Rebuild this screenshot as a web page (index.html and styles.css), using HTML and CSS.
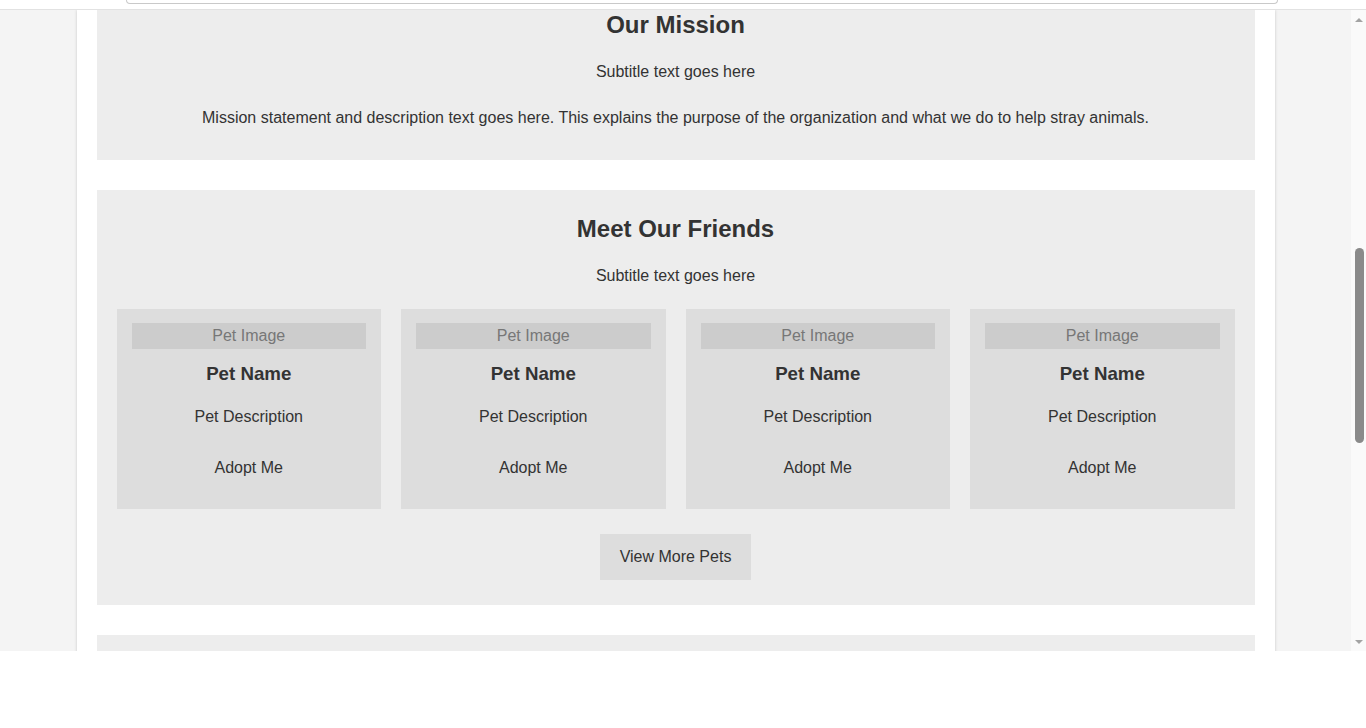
FILE: index.html
```html
<!DOCTYPE html>
<html lang="en">
<head>
<meta charset="utf-8">
<title>Stray Animals</title>
<link rel="stylesheet" href="styles.css">
</head>
<body>
<div class="topbar"><div class="omnibox"></div></div>
<div class="viewport">
  <div class="page">
    <div class="container">
      <section class="section section--clipped">
        <h2 class="section-title">Our Mission</h2>
        <p class="subtitle">Subtitle text goes here</p>
        <p class="mission-text">Mission statement and description text goes here. This explains the purpose of the organization and what we do to help stray animals.</p>
      </section>
      <section class="section">
        <h2 class="section-title">Meet Our Friends</h2>
        <p class="subtitle">Subtitle text goes here</p>
        <div class="cards">
          <div class="card">
            <div class="pet-image">Pet Image</div>
            <h3 class="pet-name">Pet Name</h3>
            <p class="pet-desc">Pet Description</p>
            <p class="adopt">Adopt Me</p>
          </div>
          <div class="card">
            <div class="pet-image">Pet Image</div>
            <h3 class="pet-name">Pet Name</h3>
            <p class="pet-desc">Pet Description</p>
            <p class="adopt">Adopt Me</p>
          </div>
          <div class="card">
            <div class="pet-image">Pet Image</div>
            <h3 class="pet-name">Pet Name</h3>
            <p class="pet-desc">Pet Description</p>
            <p class="adopt">Adopt Me</p>
          </div>
          <div class="card">
            <div class="pet-image">Pet Image</div>
            <h3 class="pet-name">Pet Name</h3>
            <p class="pet-desc">Pet Description</p>
            <p class="adopt">Adopt Me</p>
          </div>
        </div>
        <div class="more-row"><span class="more-btn">View More Pets</span></div>
      </section>
      <section class="section section--next"></section>
    </div>
  </div>
  <div class="scrollbar">
    <div class="arrow arrow--up"></div>
    <div class="thumb"></div>
    <div class="arrow arrow--down"></div>
  </div>
</div>
<div class="below"></div>
</body>
</html>
```

FILE: styles.css
```css
* { box-sizing: border-box; }
html, body { margin: 0; padding: 0; background: #ffffff; }
body {
  font-family: "Liberation Sans", Arial, sans-serif;
  color: #333333;
  width: 1366px;
  height: 728px;
  overflow: hidden;
}
.topbar {
  height: 10px;
  background: #ffffff;
  border-bottom: 1px solid #e2e2e2;
}
.omnibox {
  margin-left: 126px;
  width: 1152px;
  height: 4px;
  border: 1px solid #c9c9c9;
  border-top: none;
  border-radius: 0 0 12px 12px;
}
.viewport {
  height: 641px;
  display: flex;
  overflow: hidden;
}
.page {
  flex: 1;
  background: #f4f4f4;
  overflow: hidden;
}
.container {
  width: 1198px;
  margin: 0 auto;
  background: #ffffff;
  box-shadow: 0 0 3px rgba(0, 0, 0, 0.18);
  padding: 0 20px;
  min-height: 641px;
  display: flex;
  flex-direction: column;
  gap: 30px;
}
.section {
  background: #ededed;
  padding: 25px 20px 25px;
  text-align: center;
}
.section--clipped {
  padding-top: 1px;
  padding-bottom: 33px;
}
.section--next { min-height: 200px; }
.section-title {
  margin: 0;
  font-size: 24px;
  line-height: 28px;
  font-weight: 700;
}
.subtitle {
  margin: 24px 0 0;
  font-size: 16px;
  line-height: 18px;
}
.mission-text {
  margin: 28px 0 0;
  font-size: 16px;
  line-height: 18px;
}
.cards {
  margin-top: 24px;
  display: grid;
  grid-template-columns: repeat(4, 1fr);
  gap: 20px;
}
.card {
  background: #dddddd;
  height: 200px;
  padding: 14px 15px;
  display: flex;
  flex-direction: column;
}
.pet-image {
  height: 26px;
  line-height: 26px;
  background: #cccccc;
  color: #777777;
  font-size: 16px;
}
.pet-name {
  margin: 13px 0 0;
  font-size: 18.72px;
  line-height: 24px;
  font-weight: 700;
}
.pet-desc {
  margin: 22px 0 0;
  font-size: 16px;
  line-height: 18px;
}
.adopt {
  margin: 33px 0 0;
  font-size: 16px;
  line-height: 18px;
}
.more-row {
  margin-top: 25px;
  display: flex;
  justify-content: center;
}
.more-btn {
  background: #dddddd;
  padding: 14px 20px;
  font-size: 16px;
  line-height: 18px;
}
.scrollbar {
  width: 15px;
  background: #fafafa;
  display: flex;
  flex-direction: column;
  align-items: center;
  padding: 6px 0 7px 1px;
}
.arrow {
  width: 0;
  height: 0;
  border-left: 4px solid transparent;
  border-right: 4px solid transparent;
}
.arrow--up { border-bottom: 4px solid #a3a3a3; margin-top: 2px; }
.arrow--down { border-top: 4px solid #a3a3a3; margin-top: auto; }
.thumb {
  margin-top: 226px;
  width: 9px;
  height: 195px;
  background: #8a8a8a;
  border-radius: 5px;
}
.below {
  height: 77px;
  background: #ffffff;
}
```
